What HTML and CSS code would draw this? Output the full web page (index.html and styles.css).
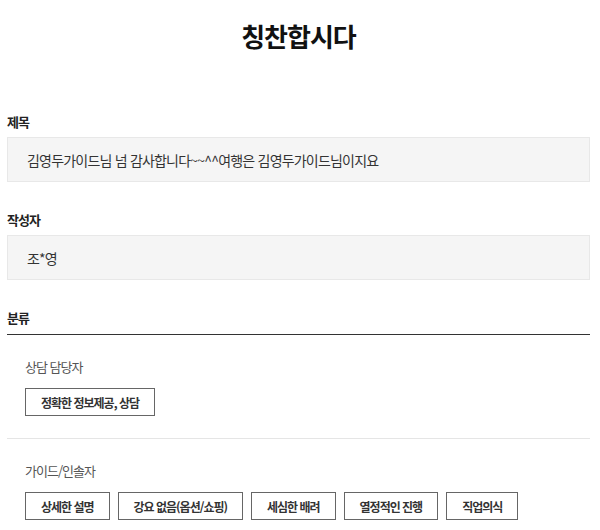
FILE: index.html
```html
<!DOCTYPE html>
<html lang="ko">
<head>
    <meta charset="UTF-8">
    <meta name="viewport" content="width=device-width, initial-scale=1.0">
    <title>칭찬합시다</title>
    <link rel="stylesheet" href="styles.css">
</head>
<body>
    <div class="container">
        <h1 class="page-title">칭찬합시다</h1>

        <div class="field">
            <div class="field-label">제목</div>
            <div class="field-box">김영두가이드님 넘 감사합니다~~^^여행은 김영두가이드님이지요</div>
        </div>

        <div class="field">
            <div class="field-label">작성자</div>
            <div class="field-box">조*영</div>
        </div>

        <div class="category">
            <div class="category-title">분류</div>

            <div class="group">
                <div class="group-name">상담 담당자</div>
                <div class="tag-list">
                    <span class="tag">정확한 정보제공, 상담</span>
                </div>
            </div>

            <div class="group">
                <div class="group-name">가이드/인솔자</div>
                <div class="tag-list">
                    <span class="tag">상세한 설명</span>
                    <span class="tag">강요 없음(옵션/쇼핑)</span>
                    <span class="tag">세심한 배려</span>
                    <span class="tag">열정적인 진행</span>
                    <span class="tag">직업의식</span>
                </div>
            </div>
        </div>
    </div>
</body>
</html>
```

FILE: styles.css
```css
body {
    margin: 0;
    font-family: "Noto Sans CJK KR", "Noto Sans", sans-serif;
    background-color: #fff;
    color: #333;
}

.container {
    padding: 0 10px 0 7px;
}

.page-title {
    margin: 0;
    padding-top: 18px;
    font-size: 26px;
    line-height: 36px;
    font-weight: bold;
    letter-spacing: -1px;
    text-align: center;
    color: #111;
}

.field {
    margin-top: 28px;
}

.field:first-of-type {
    margin-top: 58px;
}

.field-label,
.category-title {
    font-size: 13px;
    line-height: 20px;
    font-weight: bold;
    letter-spacing: -1px;
    color: #222;
}

.field-label {
    margin-bottom: 5px;
}

.field-box {
    display: flex;
    align-items: center;
    box-sizing: border-box;
    height: 45px;
    padding-left: 19px;
    background-color: #f5f5f5;
    border: 1px solid #e8e8e8;
    font-size: 14px;
    letter-spacing: -0.8px;
    color: #333;
}

.category {
    margin-top: 28px;
}

.category-title {
    padding-bottom: 6px;
    border-bottom: 1px solid #333;
}

.group {
    padding: 22px 0 22px 18px;
    border-bottom: 1px solid #e5e5e5;
}

.group:last-child {
    border-bottom: none;
}

.group-name {
    font-size: 13px;
    line-height: 20px;
    letter-spacing: -1px;
    color: #555;
    margin-bottom: 11px;
}

.tag-list {
    display: flex;
    flex-wrap: wrap;
    gap: 8px;
}

.tag {
    display: inline-flex;
    align-items: center;
    box-sizing: border-box;
    height: 28px;
    padding: 0 15px;
    border: 1px solid #666;
    background-color: #fff;
    font-size: 12px;
    font-weight: bold;
    letter-spacing: -1px;
    color: #333;
}
```
